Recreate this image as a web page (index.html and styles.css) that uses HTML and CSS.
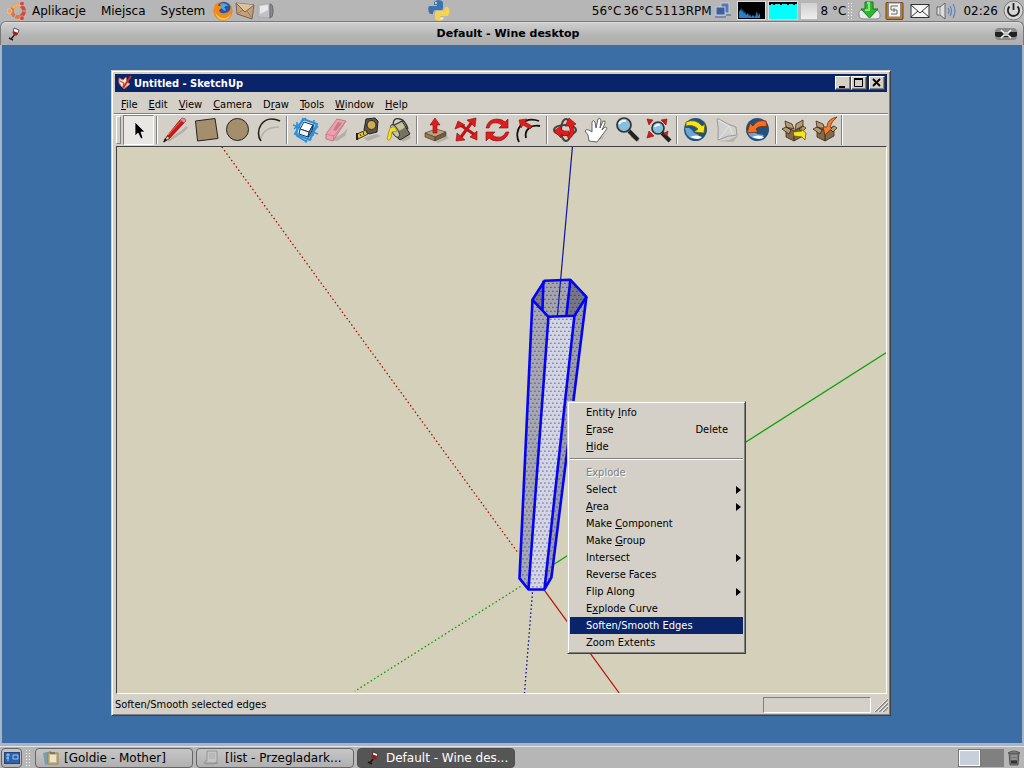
FILE: index.html
```html
<!DOCTYPE html>
<html lang="pl">
<head>
  <meta charset="UTF-8">
  <title>Default - Wine desktop</title>
  <link rel="stylesheet" href="styles.css">
</head>
<body>

  <!-- Top panel -->
  <header class="panel panel-top">
    <nav class="panel-menu">
      <svg class="ubuntu" width="20" height="20" viewBox="0 0 20 20">
        <circle cx="11" cy="10" r="6" fill="none" stroke="#e8703c" stroke-width="3.500"/>
        <path d="M14 4.800A6 6 0 0 1 14 15.200" fill="none" stroke="#d04a44" stroke-width="3.500"/>
        <path d="M5.800 7A6 6 0 0 1 14 4.800" fill="none" stroke="#f0b060" stroke-width="3.500"/>
        <path d="M11 10L19 10M11 10L7 3M11 10L7 17" stroke="#b6b6b6" stroke-width="1"/>
        <circle cx="2.500" cy="10" r="2.500" fill="#f0a050" stroke="#ddd" stroke-width=".5"/>
        <circle cx="15" cy="2.600" r="2.400" fill="#d84848" stroke="#ddd" stroke-width=".5"/>
        <circle cx="15" cy="17.200" r="2.400" fill="#d84830" stroke="#ddd" stroke-width=".5"/>
      </svg>
      <button class="panel-item">Aplikacje</button>
      <button class="panel-item">Miejsca</button>
      <button class="panel-item">System</button>
    </nav>
    <div class="launchers">
      <svg width="20" height="20" viewBox="0 0 20 20">
        <circle cx="10" cy="10" r="9.500" fill="#e8791c"/>
        <circle cx="11" cy="8" r="7" fill="#2456a8"/>
        <path d="M7 3Q12 1 16 5Q12 4 11 7Q14 8 12 10Q9 9 7 3" fill="#5ba2e0"/>
        <path d="M1 6Q2 3 4 2L5 5Q8 4 9 7L6 9Q7 13 12 12Q17 12 18 5Q21 12 16 17Q9 22 3 16Q0 12 1 6" fill="#f08a20"/>
        <path d="M2 10Q4 17 11 17Q16 17 18 12Q17 18 11 19Q3 19 2 10" fill="#ffc83c"/>
      </svg>
      <svg width="20" height="20" viewBox="0 0 20 20">
        <path d="M1 2L19 4L17 18L2 13Z" fill="#c3a17d" stroke="#7a644c"/>
        <path d="M1 2L10 11L19 4" fill="#dcc0a0" stroke="#7a644c"/>
        <path d="M2 13L8 9M17 17L12 10" stroke="#947a5c"/>
      </svg>
      <svg width="18" height="20" viewBox="0 0 18 20">
        <path d="M1 4L13 2V17L1 16Z" fill="#bfc3c8" stroke="#aaa"/>
        <path d="M3 5L11 4V9L3 13Z" fill="#e6e8ea"/>
        <path d="M13 3Q16 3 16 10Q16 16 13 17Z" fill="#8c8c90" stroke="#666"/>
      </svg>
    </div>
    <div class="middle">
      <svg width="22" height="22" viewBox="0 0 22 22">
        <path d="M6 2Q11-2 15 2V8Q15 10 13 10H8Q5 10 5 14H2Q-1 10 1 6H9V5H6Z" fill="#3d73a8"/>
        <path d="M17 7H20Q23 12 20 16H12V17H16V19Q11 23 7 19V13Q7 11 9 11H14Q17 11 17 7" fill="#f8d44c"/>
        <circle cx="8" cy="3" r="1" fill="#dce8f4"/>
        <circle cx="13.500" cy="18.500" r="1" fill="#fff8dc"/>
      </svg>
    </div>
    <div class="tray">
      <div class="sensors"><span>56°C</span><span>36°C</span><span>5113RPM</span></div>
      <svg class="net" width="18" height="18" viewBox="0 0 18 18">
        <rect x="7" y="1" width="8" height="10" fill="#5878b4" stroke="#c8ccd4"/>
        <rect x="2" y="5" width="9" height="8" fill="#3a60a0" stroke="#c4c8d4"/>
        <path d="M1 15H12M12 13H17" stroke="#8088a0" stroke-width="2"/>
      </svg>
      <svg class="graph" width="29" height="19" viewBox="0 0 29 19">
        <rect x=".5" y=".5" width="28" height="18" fill="#000" stroke="#ddd"/>
        <path d="M2 17V9L3 11V7L4 10V6L5 11L6 8L7 13L8 10L9 14L11 12L12 15L13 13L14 16L16 14L18 16L20 10L21 15L23 12V17Z" fill="#2480c8"/>
      </svg>
      <svg class="graph" width="30" height="19" viewBox="0 0 30 19">
        <rect x=".5" y=".5" width="29" height="18" fill="#00ffff" stroke="#ddd"/>
        <path d="M1 1H29V3H27V4H25V3H21V4H19V3H14V4H12V3H7V4H5V3H3V4H1Z" fill="#000"/>
      </svg>
      <span class="weather-box"></span>
      <span class="temp">8 °C</span>
      <span class="grip"></span>
      <svg class="update" width="23" height="20" viewBox="0 0 23 20">
        <path d="M4 9Q0 9 1 14Q1 18 6 18H18Q23 18 22 13Q21 9 18 9Z" fill="#e6eaee" stroke="#888"/>
        <path d="M7 1H15V8H20L11.500 17L3 8H7Z" fill="#2eb62e" stroke="#157a1c"/>
        <path d="M9 2H11V9H7" fill="none" stroke="#8fe47c" stroke-width="2"/>
      </svg>
      <svg class="clip" width="19" height="20" viewBox="0 0 19 20">
        <rect x="1" y="1.500" width="17" height="17" rx="1" fill="#bc7a24" stroke="#75480f"/>
        <rect x="3.500" y="2" width="12" height="14" fill="#f4f4f0" stroke="#888"/>
        <path d="M13 5H6V9H12V13H6M9 7V11" fill="none" stroke="#666"/>
      </svg>
      <svg class="mail" width="20" height="16" viewBox="0 0 20 16">
        <rect x="1" y="1.500" width="18" height="13" fill="#f4f4f4" stroke="#333"/>
        <path d="M1 2L10 10L19 2M1 14L8 8M19 14L12 8" fill="none" stroke="#333"/>
      </svg>
      <svg class="sound" width="21" height="18" viewBox="0 0 21 18">
        <path d="M1 5H4L9 1V17L4 13H1Z" fill="#ddd" stroke="#666"/>
        <path d="M4 5V13" stroke="#888"/>
        <path d="M12 6Q14 9 12 12M14 4Q17 9 14 14M17 2Q21 9 17 16" fill="none" stroke="#5b82bd" stroke-width="1.200"/>
      </svg>
      <time class="clock">02:26</time>
      <svg width="21" height="21" viewBox="0 0 21 21">
        <circle cx="10.500" cy="10.500" r="9.500" fill="#d6d6d6" stroke="#777"/>
        <path d="M6.500 6.500A5.600 5.600 0 1 0 14.500 6.500M10.500 3V10" fill="none" stroke="#222" stroke-width="1.800"/>
      </svg>
    </div>
  </header>

  <!-- Wine desktop window -->
  <main class="wine">
    <div class="wine-title">
      <svg width="14" height="14" viewBox="0 0 14 14">
        <path d="M7 1L12 3L10 8Q7 9 6 6Z" fill="#fff" stroke="#333" stroke-width=".8"/>
        <path d="M6.500 4L11 6L10 8Q7 9 6 6Z" fill="#b01818"/>
        <path d="M7.500 8L4 12M2 11L6 13" stroke="#222" stroke-width="1.400"/>
      </svg>
      <h1>Default - Wine desktop</h1>
      <button class="wine-close" aria-label="Zamknij">
        <svg width="22" height="12" viewBox="0 0 22 12">
          <rect width="22" height="12" rx="4" fill="#8a8a8a"/>
          <path d="M0 4H22V7Q22 9 18 9H4Q0 9 0 7Z" fill="#222"/>
          <path d="M6 2L9 5H13L16 2M6 10L9 7H13L16 10" fill="none" stroke="#fff" stroke-width="1.500"/>
        </svg>
      </button>
    </div>

    <div class="desktop">
      <section class="window">
        <div class="window-title">
          <svg width="16" height="16" viewBox="0 0 16 16">
            <path d="M2 3L6 5L9 2L10 7L13 9L7 14L4 11L2 8Z" fill="#f4e4d4" stroke="#c46a50"/>
            <path d="M14 1L6 13" stroke="#d42a1c" stroke-width="2"/>
            <path d="M3 6L7 8L6 12" fill="none" stroke="#b03020"/>
          </svg>
          <h2>Untitled - SketchUp</h2>
          <button class="win-btn" aria-label="Minimize"><svg width="10" height="10" viewBox="0 0 10 10"><path d="M1 9H7" stroke="#000" stroke-width="2"/></svg></button>
          <button class="win-btn" aria-label="Maximize"><svg width="10" height="10" viewBox="0 0 10 10"><path d="M.500 1.500V8.500H8.500V1.500" fill="none" stroke="#000"/><path d="M0 1H9" stroke="#000" stroke-width="2"/></svg></button>
          <button class="win-btn close" aria-label="Close"><svg width="10" height="10" viewBox="0 0 10 10"><path d="M1 1L8 8M8 1L1 8" stroke="#000" stroke-width="1.800"/></svg></button>
        </div>

        <nav class="menubar">
          <button><u>F</u>ile</button>
          <button><u>E</u>dit</button>
          <button><u>V</u>iew</button>
          <button><u>C</u>amera</button>
          <button>D<u>r</u>aw</button>
          <button><u>T</u>ools</button>
          <button><u>W</u>indow</button>
          <button><u>H</u>elp</button>
        </nav>

        <div class="toolbar">
          <span class="handle"></span>
          <button class="tool active" aria-label="Select">
            <svg viewBox="0 0 28 28"><path d="M10 6V20L13 17L16 23L18 22L16 16H20Z" fill="#000" stroke="#fff" stroke-width=".7"/></svg>
          </button>
          <span class="sep"></span>
          <button class="tool" aria-label="Line">
            <svg viewBox="0 0 28 28"><path d="M6 25L21 15L25 11" stroke="#b4b0a8" stroke-width="2.500" fill="none"/><path d="M2 26L5 20L18 4L22 7L8 22Z" fill="#d41414" stroke="#6a1010" stroke-width=".6"/><path d="M6 19L19 5" stroke="#ff6a60"/><path d="M2 26L5 20L8 22Z" fill="#e8c898" stroke="#333" stroke-width=".7"/><path d="M1 26.500L3 22L5 24Z" fill="#111"/><path d="M18 4L20 2Q24 2 24 5L22 7Z" fill="#e88a98" stroke="#8c3040" stroke-width=".6"/></svg>
          </button>
          <button class="tool" aria-label="Rectangle">
            <svg viewBox="0 0 28 28"><path d="M2.500 5L22 2.500L25 22.500L4.500 25Z" fill="#a58e6c" stroke="#222"/></svg>
          </button>
          <button class="tool" aria-label="Circle">
            <svg viewBox="0 0 28 28"><circle cx="13.500" cy="13.500" r="11" fill="#a58e6c" stroke="#222"/></svg>
          </button>
          <button class="tool" aria-label="Arc">
            <svg viewBox="0 0 28 28"><path d="M6 22Q9 11 24 11" fill="none" stroke="#b4b0a8" stroke-width="1.500"/><path d="M6 25C-1 16 7-3 25 5" fill="none" stroke="#222" stroke-width="1.600"/></svg>
          </button>
          <span class="sep"></span>
          <button class="tool" aria-label="Make Component">
            <svg viewBox="0 0 28 28"><path d="M11 3L25 8L18 24L3 18Z" fill="#dceefa" stroke="#2890dc" stroke-width="2"/><path d="M1 9L26 18M2 13L14 2M13 26L26 10M5 6L5 20L15 26M22 4L21 20" fill="none" stroke="#2890dc" stroke-width="1.600"/><path d="M12 6L21 9L17 16L8 13Z" fill="#fff" stroke="#1c3450"/><path d="M8 13L17 16L16 21L7 18Z" fill="#e8f2fa" stroke="#1c3450"/><path d="M17 16L21 9L20 15L16 21Z" fill="#6d8fae" stroke="#1c3450"/></svg>
          </button>
          <button class="tool" aria-label="Eraser">
            <svg viewBox="0 0 28 28"><path d="M9 24L20 17L25 12L22 20L14 25Z" fill="#b4b0a8"/><path d="M3 18L14 3L23 5L12 22L10 25L3 23Z" fill="#f0a0ac" stroke="#b0707c" stroke-width=".8"/><path d="M3 18L11 20L23 5M11 20L10 25" fill="none" stroke="#c8808c"/><path d="M15 6L19 7L13 15L10 14Z" fill="#c87a88"/></svg>
          </button>
          <button class="tool" aria-label="Tape Measure">
            <svg viewBox="0 0 28 28"><path d="M9 22L22 18L27 20L14 25Z" fill="#b4b0a8"/><path d="M12 3L21 2L24 5L23 16L15 18L10 14Z" fill="#555" stroke="#222"/><circle cx="17.500" cy="9" r="4.500" fill="#e6ad20" stroke="#222"/><circle cx="17.500" cy="9" r="2" fill="#aaa"/><path d="M3 18L12 14L14 18L4 23Z" fill="#e8c52c" stroke="#333"/><path d="M6 18L7 20M9 16L10 19M12 15L13 17" stroke="#333"/><path d="M3 17V24" stroke="#222" stroke-width="2"/></svg>
          </button>
          <button class="tool" aria-label="Paint Bucket">
            <svg viewBox="0 0 28 28"><path d="M13 21L23 17L26 22L18 26Z" fill="#b4b0a8"/><path d="M7 10L17 5L25 18L15 24Q9 20 7 10Z" fill="#77735f" stroke="#222"/><path d="M9 10L17 6L20 11Q16 15 12 15Z" fill="#c5c1a0"/><ellipse cx="10" cy="15" rx="3" ry="7" transform="rotate(-30 10 15)" fill="#c7c3a4" stroke="#333"/><path d="M8 9Q8 1 15 3Q20 4 23 13" fill="none" stroke="#333" stroke-width="1.400"/><path d="M10 11Q5 10 4 15L2 23Q4 26 6 22L7 16L12 15Z" fill="#f0df25" stroke="#92850a" stroke-width=".7"/></svg>
          </button>
          <span class="sep"></span>
          <button class="tool" aria-label="Push/Pull">
            <svg viewBox="0 0 28 28"><path d="M14 26L25 20L27 22L16 27Z" fill="#b4b0a8"/><path d="M3 17L14 13L24 16L13 21Z" fill="#bca580" stroke="#51442d" stroke-width=".7"/><path d="M3 17V21L13 25V21Z" fill="#90795a" stroke="#51442d" stroke-width=".7"/><path d="M13 21L24 16V20L13 25Z" fill="#715d42" stroke="#51442d" stroke-width=".7"/><path d="M13 2L18 9H15V17H11V9H8Z" fill="#e51a1a" stroke="#751010" stroke-width=".6"/></svg>
          </button>
          <button class="tool" aria-label="Move">
            <svg viewBox="0 0 28 28"><path d="M6 8L22 19M19 6L8 21" stroke="#c01414" stroke-width="3"/><path d="M14 4L23 2L22 11ZM2 13L5 5L12 9ZM4 17L12 24L3 25ZM17 21L24 15L24 24Z" fill="#e51a1a" stroke="#751010" stroke-width=".6"/></svg>
          </button>
          <button class="tool" aria-label="Rotate">
            <svg viewBox="0 0 28 28"><path d="M2 12Q4 3 13 3Q18 3 21 6L24 3V12H15L18 9Q14 6 9 7Q6 8 5 12Z" fill="#e51a1a" stroke="#751010" stroke-width=".6"/><path d="M25 16Q22 25 13 25Q8 25 5 22L2 25V16H11L8 19Q12 22 17 21Q20 20 22 16Z" fill="#e51a1a" stroke="#751010" stroke-width=".6"/></svg>
          </button>
          <button class="tool" aria-label="Offset">
            <svg viewBox="0 0 28 28"><path d="M4 26C-2 15 8-1 24 5" fill="none" stroke="#111" stroke-width="1.800"/><path d="M11 22C9 14 16 8 25 10" fill="none" stroke="#111" stroke-width="1.800"/><path d="M4 4L12 3L10 6L17 10L15 13L8 9L6 12Z" fill="#e51a1a" stroke="#751010" stroke-width=".6"/></svg>
          </button>
          <span class="sep"></span>
          <button class="tool" aria-label="Orbit">
            <svg viewBox="0 0 28 28"><ellipse cx="13" cy="14" rx="11" ry="5" fill="none" stroke="#444" stroke-width="2"/><ellipse cx="14" cy="14" rx="5" ry="11" fill="none" stroke="#444" stroke-width="2"/><path d="M17 2L24 8L21 10Q24 19 17 23L15 20Q20 16 17 10L13 10Z" fill="#e51a1a" stroke="#751010" stroke-width=".6"/><path d="M2 15L9 10V13Q12 16 17 15V19Q12 21 9 18L9 22Z" fill="#e51a1a" stroke="#751010" stroke-width=".6"/></svg>
          </button>
          <button class="tool" aria-label="Pan">
            <svg viewBox="0 0 28 28"><path d="M9 26L19 23L26 14L21 20Z" fill="#b4b0a8"/><path d="M6 25L5 19L2 15Q3 13 6 14L9 16L9 6Q10 3 12 6L13 12L15 3Q17 1 18 4L17 12L20 5Q23 4 22 7L19 14L22 11Q25 11 23 14L17 22L14 26Z" fill="#fff" stroke="#555" stroke-width=".9"/></svg>
          </button>
          <button class="tool" aria-label="Zoom">
            <svg viewBox="0 0 28 28"><path d="M17 20L25 25" stroke="#b4b0a8" stroke-width="3"/><path d="M15 15L24 24" stroke="#222" stroke-width="4"/><circle cx="10" cy="9" r="7" fill="#88bede" stroke="#333" stroke-width="1.700"/><path d="M5 8Q7 4 12 5" fill="none" stroke="#e8f5ff" stroke-width="2"/></svg>
          </button>
          <button class="tool" aria-label="Zoom Extents">
            <svg viewBox="0 0 28 28"><path d="M17 17L25 25" stroke="#222" stroke-width="4"/><circle cx="13" cy="12" r="6" fill="#88bede" stroke="#333" stroke-width="1.700"/><path d="M10 11Q11 8 15 9" fill="none" stroke="#e8f5ff" stroke-width="2"/><path d="M2 3L8 4L4 9ZM22 3L21 9L16 4ZM2 22L4 15L9 20ZM23 15L18 18L22 20Z" fill="#d81818" stroke="#751010" stroke-width=".6"/></svg>
          </button>
          <span class="sep"></span>
          <button class="tool" aria-label="Get Current View">
            <svg viewBox="0 0 28 28"><circle cx="13.500" cy="13.500" r="11.500" fill="#24507c"/><path d="M3 12Q9 11 12 17L17 19Q16 24 9 22Q4 20 3 12" fill="#6aa6d8"/><path d="M8 21Q14 18 20 21Q17 25 8 21" fill="#fff"/><path d="M4 6Q14 2 20 10L23 8L22 17L12 16L16 13Q11 8 4 10Z" fill="#f5e520" stroke="#655f08" stroke-width=".8"/></svg>
          </button>
          <button class="tool" aria-label="Toggle Terrain">
            <svg viewBox="0 0 28 28"><path d="M4 25L16 24L26 19L20 26Z" fill="#b5b1aa"/><path d="M4 3L6 3Q15 9 23 11L24 19Q15 19 5 24Q6 12 4 3Z" fill="#d1d1d1" stroke="#999"/><path d="M5 4L16 10L20 19M16 10L6 23" fill="none" stroke="#e6e6e6"/></svg>
          </button>
          <button class="tool" aria-label="Place Model">
            <svg viewBox="0 0 28 28"><circle cx="13.500" cy="13.500" r="11.500" fill="#24507c"/><path d="M3 14Q9 13 13 18L20 19Q16 24 9 22Q4 20 3 14" fill="#6aa6d8"/><path d="M8 21Q14 18 20 21Q17 25 8 21" fill="#fff"/><path d="M22 5Q13 3 9 10L6 7L3 17L14 16L12 13Q16 9 23 11Z" fill="#f46f24" stroke="#702c08" stroke-width=".8"/></svg>
          </button>
          <span class="sep"></span>
          <button class="tool" aria-label="Get Models">
            <svg viewBox="0 0 28 28"><path d="M5 11L14 15L22 10V20L13 25L5 21Z" fill="#83694a" stroke="#332818" stroke-width=".8"/><path d="M5 11L10 14L8 18L1 13ZM22 10L18 13L21 16L25 12ZM4 5L11 8L13 13L5 11ZM15 8L22 4L22 10L14 14Z" fill="#b59a74" stroke="#332818" stroke-width=".8"/><path d="M13 15V25" stroke="#332818"/><path d="M12 16L21 15L19 12L25 17L24 24L21 21L13 20Z" fill="#f5e520" stroke="#655f08" stroke-width=".8"/></svg>
          </button>
          <button class="tool" aria-label="Share Model">
            <svg viewBox="0 0 28 28"><path d="M5 11L14 15L22 10V20L13 25L5 21Z" fill="#83694a" stroke="#332818" stroke-width=".8"/><path d="M5 11L10 14L8 18L1 13ZM22 10L18 13L21 16L25 12ZM4 5L11 8L13 13L5 11Z" fill="#b59a74" stroke="#332818" stroke-width=".8"/><path d="M13 15V25" stroke="#332818"/><path d="M25 1Q15 3 15 11L11 11L13 19L20 12L18 11Q19 6 25 1Z" fill="#f47f34" stroke="#702c08" stroke-width=".8"/></svg>
          </button>
          <span class="toolbar-end"></span>
        </div>

        <div class="drawing">
          <svg class="model" viewBox="0 0 770 547" preserveAspectRatio="xMinYMin slice">
            <defs>
              <pattern id="dots" width="4" height="8" patternUnits="userSpaceOnUse">
                <path d="M0 0H1V1H0ZM2 4H3V5H2Z" fill="#181868"/>
              </pattern>
            </defs>
            <!-- axes -->
            <g stroke-width="1.300" stroke-dasharray="1.500 2.500">
              <path d="M105 0L402 407" stroke="#a81010"/>
              <path d="M404 440L238 545" stroke="#089808"/>
              <path d="M416 446L408 547" stroke="#080898"/>
            </g>
            <path d="M434 420L770 206" stroke="#08a008" stroke-width="1.200"/>
            <path d="M428 444L503 547" stroke="#b01010" stroke-width="1.200"/>
            <!-- inside of the tube -->
            <path d="M416 153L428 134L426 165Z" fill="#7b7b87"/>
            <path d="M428 134L454 133L450 169L432 170L426 165Z" fill="#a2a3ad"/>
            <path d="M454 133L470 150L458 169H450Z" fill="#777784"/>
            <!-- outer faces -->
            <path d="M416 153L432 170L412 443L403 432Z" fill="#a6a7b1"/>
            <path d="M432 170L458 169L428 443H412Z" fill="#d3d5e2"/>
            <path d="M458 169L470 150L435 431L428 443Z" fill="#9c9da9"/>
            <path d="M428 134L454 133L470 150L435 431L428 443H412L403 432L416 153Z" fill="url(#dots)"/>
            <path d="M456 0L441 169" stroke="#1414a0" stroke-width="1.200"/>
            <g fill="none" stroke="#0404f0" stroke-width="2.600" stroke-linejoin="round">
              <path d="M427 134L426 164M454 133L450 168"/>
              <path d="M428 134L454 133L470 150L458 169L432 170L416 153Z"/>
              <path d="M416 153L403 432L412 443H428L435 431L470 150M432 170L412 443M458 169L428 443"/>
            </g>
          </svg>

          <div class="context-menu" role="menu">
            <button role="menuitem">Entity <u>I</u>nfo</button>
            <button role="menuitem"><u>E</u>rase <span class="key">Delete</span></button>
            <button role="menuitem"><u>H</u>ide</button>
            <hr>
            <button role="menuitem" disabled>Explode</button>
            <button role="menuitem" class="sub">Select</button>
            <button role="menuitem" class="sub"><u>A</u>rea</button>
            <button role="menuitem">Make <u>C</u>omponent</button>
            <button role="menuitem">Make <u>G</u>roup</button>
            <button role="menuitem" class="sub">Intersect</button>
            <button role="menuitem">Reverse Faces</button>
            <button role="menuitem" class="sub">Flip Along</button>
            <button role="menuitem">E<u>x</u>plode Curve</button>
            <button role="menuitem" class="selected">Soften/Smooth Edges</button>
            <button role="menuitem">Zoom Extents</button>
          </div>
        </div>

        <footer class="statusbar">
          <label for="measure">Soften/Smooth selected edges</label>
          <input id="measure" type="text" readonly>
          <svg width="14" height="14" viewBox="0 0 14 14">
            <path d="M1 14L14 1M5 14L14 5M9 14L14 9" stroke="#808080" stroke-width="1.600"/>
            <path d="M0 14L14 0M4 14L14 4M8 14L14 8" stroke="#fff" stroke-width=".8"/>
          </svg>
        </footer>
      </section>
    </div>
  </main>

  <!-- Taskbar -->
  <footer class="panel panel-bottom">
    <button class="show-desktop" aria-label="Pokaż pulpit">
      <svg width="16" height="12" viewBox="0 0 16 12">
        <rect x=".5" y=".5" width="15" height="11" fill="#2c61ae" stroke="#204478"/>
        <path d="M2 3H6M2 6H5M4 1V9M9 3H14V7H9Z" fill="none" stroke="#a4c4ec"/>
      </svg>
    </button>
    <span class="grip"></span>
    <div class="tasks">
      <button class="task">
        <svg width="17" height="16" viewBox="0 0 17 16">
          <path d="M1 3L9 1L11 13L3 15Z" fill="#7a9cab"/>
          <rect x="6" y="3" width="10" height="11" fill="#d1b978" stroke="#968250"/>
          <rect x="8" y="5" width="6" height="7" fill="#e4e4d9"/><path d="M8 2H13V4H8Z" fill="#777"/>
        </svg>
        <span>[Goldie - Mother]</span>
      </button>
      <button class="task">
        <svg width="17" height="16" viewBox="0 0 17 16">
          <path d="M4 1H14V11L12 14H2Q0 14 2 11H4Z" fill="#c5c5c5" stroke="#969696"/>
          <path d="M6 4H12M6 6H12M6 8H12" stroke="#aaa"/><path d="M2 13H15" stroke="#888"/>
        </svg>
        <span>[list - Przegladark...</span>
      </button>
      <button class="task current">
        <svg width="17" height="16" viewBox="0 0 17 16">
          <path d="M9 2L14 4L12 9Q9 10 8 7Z" fill="#fff" stroke="#222" stroke-width=".8"/>
          <path d="M8 4L13 6L12 9Q9 10 8 7Z" fill="#a01818"/>
          <path d="M9 9L6 13M4 12L8 14" stroke="#161616" stroke-width="1.500"/>
        </svg>
        <span>Default - Wine des...</span>
      </button>
    </div>
    <div class="pager"><span class="page on"></span><span class="page"></span></div>
    <svg class="trash" width="12" height="16" viewBox="0 0 12 16">
      <path d="M1 3H11L10 15H2Z" fill="#777" stroke="#555"/>
      <path d="M0 3Q6-1 12 3Z" fill="#999" stroke="#555"/>
      <path d="M3 6H9M3 9H9" stroke="#aaa"/><path d="M3 12H9" stroke="#333" stroke-width="3"/>
    </svg>
  </footer>

</body>
</html>
```
FILE: styles.css
```css
* {
  box-sizing: border-box;
}

body {
  margin: 0;
  height: 100vh;
  display: flex;
  flex-direction: column;
  overflow: hidden;
  background: #b6b6b6;
  color: #000;
  font-family: "DejaVu Sans", sans-serif;
  font-size: 12px;
}

button {
  margin: 0;
  padding: 0;
  border: none;
  background: none;
  color: inherit;
  font: inherit;
  text-align: left;
}

svg {
  display: block;
  flex: none;
}

h1, h2 {
  margin: 0;
}

/* Gnome panels */
.panel {
  display: flex;
  align-items: center;
  flex: none;
  height: 22px;
  background: #b6b6b6;
  white-space: nowrap;
}

.panel-top {
  height: 21px;
}

.panel-menu {
  display: flex;
  align-items: center;
  gap: 15px;
  padding-left: 7px;
}

.ubuntu {
  margin-right: -10px;
}

.launchers {
  display: flex;
  gap: 2px;
  padding-left: 8px;
}

.middle {
  flex: 1;
  padding-left: 153px;
}

.tray {
  display: flex;
  align-items: center;
  gap: 4px;
}

.sensors {
  display: flex;
  gap: 2px;
  margin-right: -2px;
}

.graph {
  margin-right: -2px;
}

.net {
  margin-right: 1px;
}

.weather-box {
  width: 16px;
  height: 16px;
  margin-left: 1px;
  background: linear-gradient(#d0d0d0, #eee);
}

.temp {
  margin-right: -3px;
}

.grip {
  width: 7px;
  height: 18px;
  background: radial-gradient(circle, #fff 1px, transparent 1px) 0 0 / 3px 3px;
}

.mail, .sound, .clock {
  margin-left: 2px;
}

.clock {
  margin-right: 1px;
}

/* Wine desktop */
.wine {
  flex: 1;
  display: flex;
  flex-direction: column;
  min-height: 0;
  border: 2px solid #a9b4c6;
  border-width: 0 2px 3px;
}

.wine-title {
  display: flex;
  align-items: center;
  height: 24px;
  margin: 0 -2px;
  padding: 0 6px;
  border: 1px solid #77797e;
  border-width: 1px 1px 0;
  border-radius: 6px 6px 0 0;
  background: linear-gradient(#d0d0d0, #b4b4b4 60%, #aeaeae);
  box-shadow: inset 0 1px #dcdcdc;
}

.wine-title h1 {
  flex: 1;
  font-size: 11px;
  text-align: center;
}

.desktop {
  position: relative;
  flex: 1;
  background: #3a6ea5;
}

/* SketchUp window */
.window {
  position: absolute;
  left: 109px;
  top: 25px;
  width: 780px;
  height: 646px;
  display: flex;
  flex-direction: column;
  padding: 2px;
  border: 1px solid;
  border-color: #d4d0c8 #404040 #404040 #d4d0c8;
  background: #d4d0c8;
  box-shadow: inset 1px 1px #fff, inset -1px -1px #808080;
  font-family: "DejaVu Sans Condensed", "DejaVu Sans", sans-serif;
  font-size: 11px;
}

.window-title {
  display: flex;
  align-items: center;
  height: 18px;
  margin: 1px;
  padding: 0 2px;
  background: #0a246a;
  color: #fff;
}

.window-title h2 {
  flex: 1;
  padding-left: 1px;
  font-size: 11px;
}

.win-btn {
  width: 16px;
  height: 14px;
  padding: 1px 2px;
  border: 1px solid;
  border-color: #fff #404040 #404040 #fff;
  background: #d4d0c8;
  box-shadow: inset -1px -1px #808080;
}

.win-btn.close {
  margin-left: 2px;
}

.menubar {
  display: flex;
  height: 20px;
  padding: 2px 0 0 1px;
}

.menubar button {
  padding: 0 5px 0 6px;
}

.toolbar {
  display: flex;
  align-items: center;
  height: 33px;
  border-top: 1px solid #808080;
  box-shadow: inset 0 1px #fff;
}

.handle {
  width: 5px;
  height: 28px;
  margin: 0 2px;
  border: 1px solid;
  border-color: #fff #808080 #808080 #fff;
}

.tool {
  width: 31px;
  height: 30px;
  padding: 1px 1px 1px 2px;
}

.tool svg {
  width: 28px;
  height: 28px;
}

.tool.active {
  border: 1px solid;
  border-color: #808080 #fff #fff #808080;
  padding: 0 0 0 1px;
  background: #e9e7e3;
}

.sep {
  width: 2px;
  height: 28px;
  margin: 0 2px;
  border-left: 1px solid #808080;
  border-right: 1px solid #fff;
}

.toolbar-end {
  width: 2px;
  height: 30px;
  border-left: 1px solid #808080;
  border-right: 1px solid #fff;
}

.drawing {
  position: relative;
  flex: 1;
  min-height: 0;
  margin: 0 1px 0 2px;
  border: 1px solid;
  border-color: #404040 #fff #fff #404040;
  background: #d4d0b9;
}

.model {
  width: 100%;
  height: 100%;
}

.context-menu {
  position: absolute;
  left: 450px;
  top: 254px;
  width: 179px;
  display: flex;
  flex-direction: column;
  padding: 2px;
  border: 1px solid;
  border-color: #d4d0c8 #404040 #404040 #d4d0c8;
  background: #d4d0c8;
  box-shadow: inset 1px 1px #fff, inset -1px -1px #808080;
}

.context-menu button {
  display: flex;
  align-items: center;
  height: 17px;
  padding: 0 15px 0 16px;
  white-space: pre;
}

.context-menu .key {
  margin-left: auto;
}

.context-menu .sub {
  padding-right: 2px;
}

.context-menu .sub::after {
  content: "";
  margin-left: auto;
  border: 4px solid transparent;
  border-left: 5px solid #000;
  border-right: 0;
}

.context-menu button:disabled {
  color: #808080;
  text-shadow: 1px 1px #fff;
}

.context-menu .selected {
  background: #0a246a;
  color: #fff;
}

.context-menu hr {
  width: 100%;
  height: 2px;
  margin: 3px 0 4px;
  border: 0;
  border-top: 1px solid #808080;
  border-bottom: 1px solid #fff;
}

.statusbar {
  display: flex;
  align-items: center;
  height: 19px;
  padding: 2px 0 0 1px;
}

.statusbar label {
  flex: 1;
}

.statusbar input {
  width: 108px;
  height: 16px;
  margin-right: 3px;
  border: 1px solid;
  border-color: #808080 #fff #fff #808080;
  background: #d4d0c8;
}

/* Taskbar */
.panel-bottom {
  gap: 3px;
  padding: 1px 3px 0 1px;
  border-top: 1px solid #e4e4e4;
}

.show-desktop, .task {
  display: flex;
  align-items: center;
  height: 20px;
  border: 1px solid #666;
  border-radius: 4px;
  background: linear-gradient(#c6c6c6, #b0b0b0);
}

.show-desktop {
  justify-content: center;
  width: 21px;
}

.tasks {
  display: flex;
  flex: 1;
  gap: 3px;
}

.task {
  gap: 5px;
  width: 158px;
  padding-left: 6px;
}

.task.current {
  border-color: #505050;
  background: #555;
  color: #fff;
}

.pager {
  display: flex;
  height: 18px;
}

.page {
  width: 23px;
  background: #808080;
}

.page.on {
  border: 1px solid #fff;
  outline: 1px solid #777;
  outline-offset: -1px;
  background: #c6cfda;
  box-shadow: inset 0 0 0 1px #fff;
}

.trash {
  margin: 0 1px;
}
```
